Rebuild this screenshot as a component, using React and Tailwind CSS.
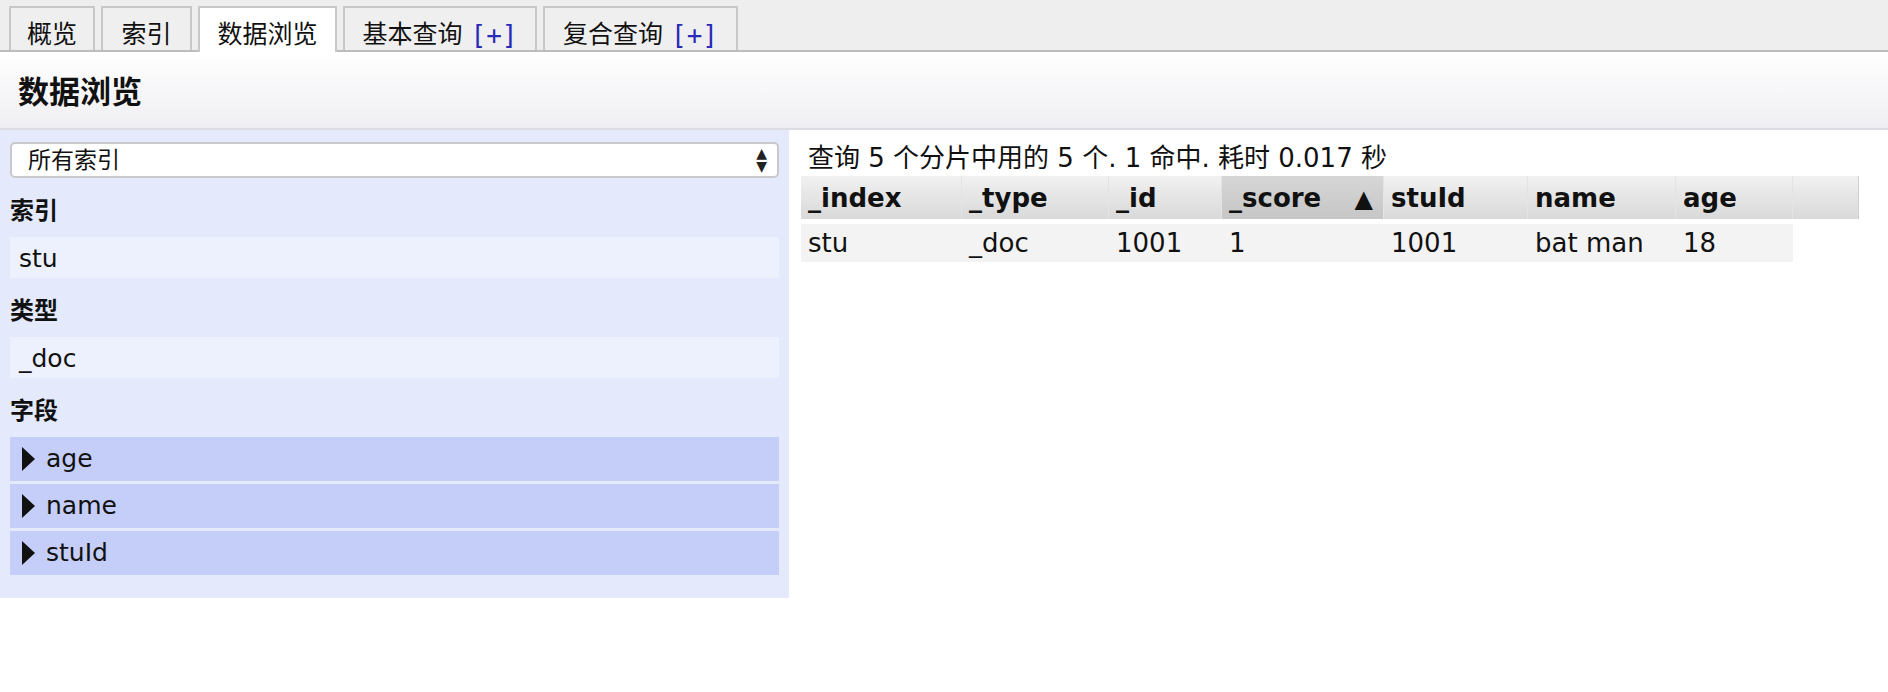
import React from "react";

const tabs = [
  { label: "概览", w: "w-[86px]" },
  { label: "索引", w: "w-[91px]" },
  { label: "数据浏览", w: "w-[139px]", active: true },
  { label: "基本查询", w: "w-[194px]", plus: true },
  { label: "复合查询", w: "w-[195px]", plus: true },
];

const columns = [
  { key: "_index", w: "w-[161px]" },
  { key: "_type", w: "w-[147px]" },
  { key: "_id", w: "w-[113px]" },
  { key: "_score", w: "w-[162px]", sorted: true },
  { key: "stuId", w: "w-[144px]" },
  { key: "name", w: "w-[148px]" },
  { key: "age", w: "w-[117px]" },
];

const row = ["stu", "_doc", "1001", "1", "1001", "bat man", "18"];

const fields = ["age", "name", "stuId"];

const Label = ({ children }) => (
  <div className="h-[59px] flex items-center pt-[6px] font-bold text-[24px] text-[#111]">
    {children}
  </div>
);

const ValueRow = ({ children }) => (
  <div className="h-[41px] flex items-center pl-[9px] pt-[3px] bg-[#edf1fd] text-[25px] text-[#111]">
    {children}
  </div>
);

const App = () => {
  return (
    <div className="w-[1888px] h-[692px] overflow-hidden bg-white text-[#111] font-['DejaVu_Sans','Noto_Sans_CJK_SC',sans-serif]">
      {/* tab bar */}
      <div className="h-[52px] bg-[#eeeeee] border-b-2 border-[#bcbcbc] flex items-end gap-[6px] pl-[9px]">
        {tabs.map((t) => (
          <div
            key={t.label}
            className={
              t.active
                ? `${t.w} h-[46px] -mb-[2px] bg-white border-2 border-b-0 border-[#c8c8c8] flex items-center justify-center text-[25px] pt-[12px] pb-[2px]`
                : `${t.w} h-[44px] bg-[#efefef] border-2 border-b-0 border-[#c8c8c8] flex items-center justify-center text-[25px] pt-[12px]`
            }
          >
            <span>{t.label}</span>
            {t.plus && (
              <span className="ml-[8px] text-[#2a2ab8] font-['DejaVu_Sans_Mono',monospace] text-[26px]">
                [+]
              </span>
            )}
          </div>
        ))}
      </div>

      {/* page header */}
      <div className="h-[78px] bg-gradient-to-b from-white to-[#efeff3] border-b-2 border-[#dcdde2] flex items-center pl-[18px] pt-[5px]">
        <span className="text-[31px] font-bold">数据浏览</span>
      </div>

      <div className="flex">
        {/* left panel */}
        <div className="w-[789px] bg-[#e4e9fb] px-[10px] pt-[12px] pb-[23px]">
          <div className="h-[36px] bg-white border-2 border-[#c9c9cc] rounded-[5px] flex items-center justify-between pl-[16px] pr-[10px]">
            <span className="text-[23px]">所有索引</span>
            <span className="flex flex-col text-[14px] leading-[13px] text-[#222]">
              <span>▲</span>
              <span>▼</span>
            </span>
          </div>

          <Label>索引</Label>
          <ValueRow>stu</ValueRow>
          <Label>类型</Label>
          <ValueRow>_doc</ValueRow>
          <Label>字段</Label>

          <div className="flex flex-col gap-[3px]">
            {fields.map((f) => (
              <div
                key={f}
                className="h-[44px] bg-[#c5cef8] flex items-center pl-[11px] gap-[10px] text-[25px]"
              >
                <svg width="15" height="26" viewBox="0 0 15 26">
                  <path d="M1 1 L14 13 L1 25 Z" fill="#111" />
                </svg>
                <span>{f}</span>
              </div>
            ))}
          </div>
        </div>

        {/* results */}
        <div className="flex-1 pl-[12px] pt-[10px]">
          <div className="h-[36px] flex items-center pl-[7px] text-[26px]">
            查询 5 个分片中用的 5 个. 1 命中. 耗时 0.017 秒
          </div>
          <div className="flex h-[43px]">
            {columns.map((c) => (
              <div
                key={c.key}
                className={
                  c.sorted
                    ? `${c.w} bg-gradient-to-b from-[#d6d6d6] to-[#c6c6c6] border-r border-[#e4e4e4] flex items-center justify-between pl-[7px] pr-[10px] pt-[2px] font-bold text-[26px]`
                    : `${c.w} bg-gradient-to-b from-[#f1f1f1] to-[#d9d9d9] border-r border-[#e4e4e4] flex items-center pl-[7px] pt-[2px] font-bold text-[26px]`
                }
              >
                <span>{c.key}</span>
                {c.sorted && <span className="text-[24px]">▲</span>}
              </div>
            ))}
            <div className="w-[66px] bg-gradient-to-b from-[#f1f1f1] to-[#d9d9d9] border-r border-[#cfcfcf]" />
          </div>
          <div className="flex h-[38px] mt-[5px]">
            {columns.map((c, i) => (
              <div
                key={c.key}
                className={`${c.w} bg-[#f3f3f3] flex items-center pl-[7px] text-[26px]`}
              >
                {row[i]}
              </div>
            ))}
          </div>
        </div>
      </div>
    </div>
  );
};

export default App;
